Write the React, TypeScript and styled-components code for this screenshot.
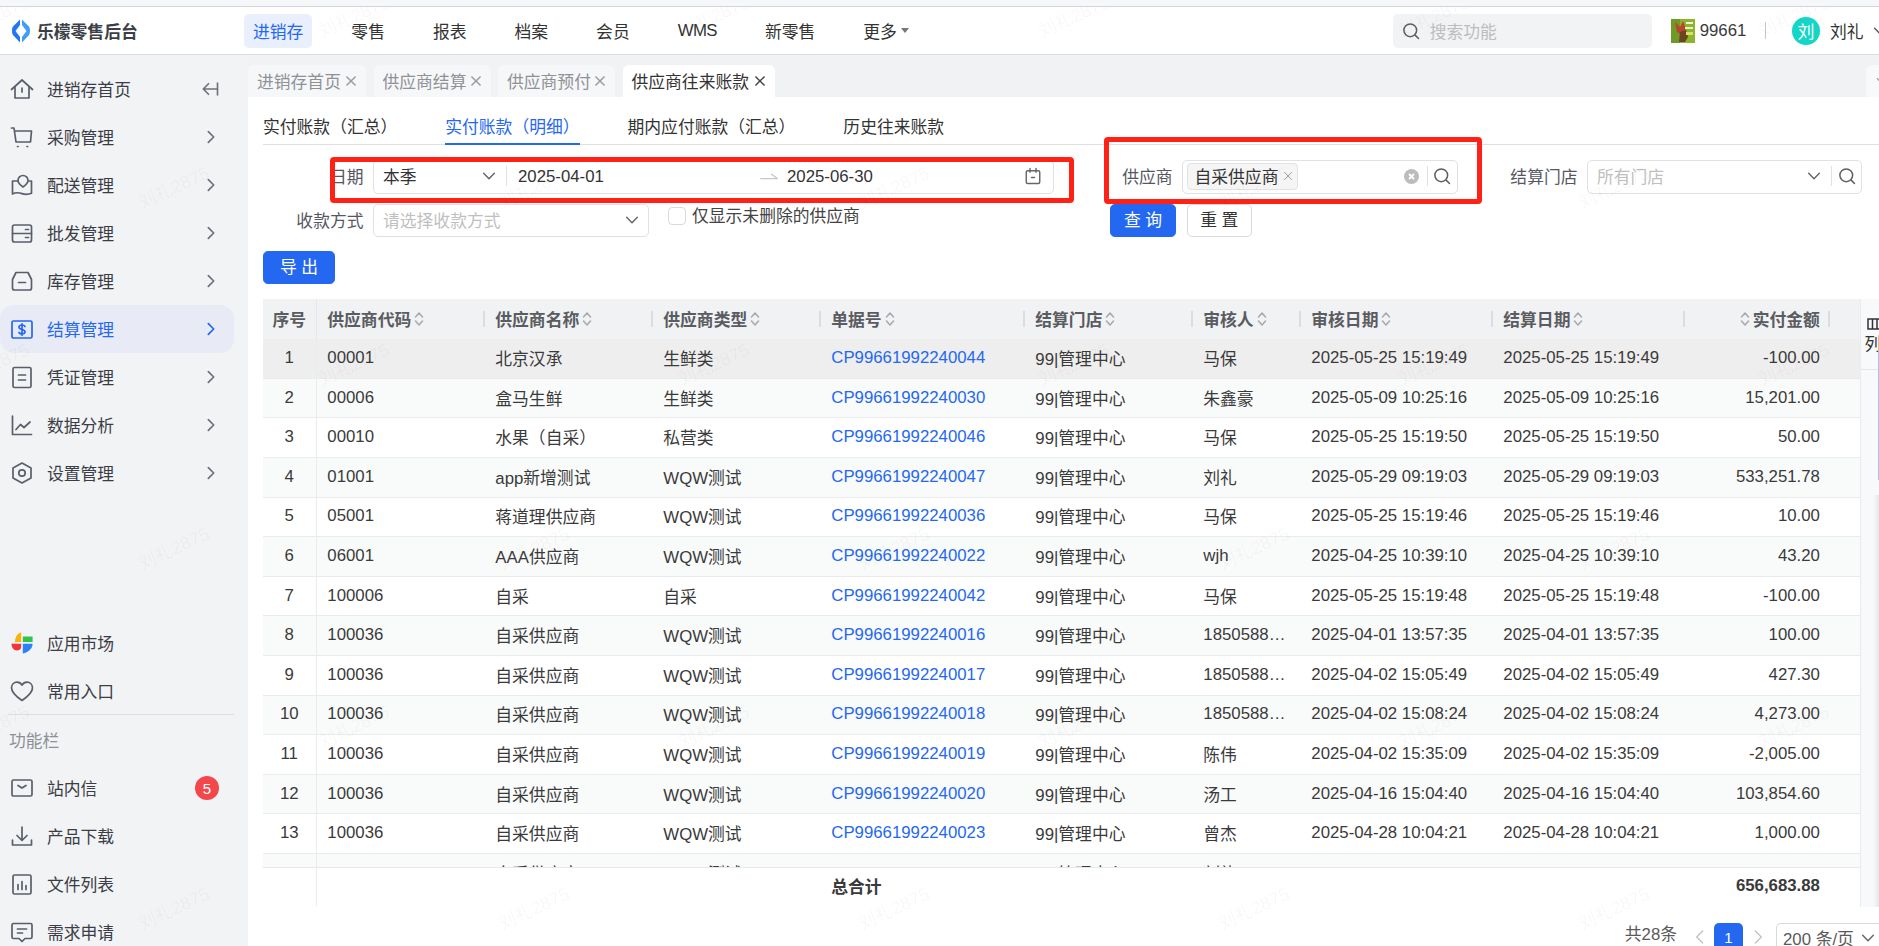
import React from 'react';
import styled, { createGlobalStyle } from 'styled-components';

const Global = createGlobalStyle`
  html, body { margin: 0; padding: 0; overflow: hidden; background: #fff; }
  body { font-family: "Liberation Sans", "Noto Sans CJK SC", sans-serif; font-size: 16.8px; color: #333; }
  #root { width: 1879px; height: 946px; }
  * { box-sizing: border-box; }
`;

const Page = styled.div`
  position: relative; width: 1879px; height: 946px; overflow: hidden;
  display: flex; flex-direction: column; background: #fff;
`;
const TopStrip = styled.div`height: 7px; flex: none; background: #f6f7f9; border-bottom: 1.2px solid #d3d4d7;`;
const Header = styled.header`
  height: 48px; flex: none; display: flex; align-items: center; background: #fff;
  border-bottom: 1.2px solid #dcdde0;
`;
const Brand = styled.div`width: 244px; flex: none; display: flex; align-items: center; padding-left: 12px; gap: 7px;`;
const BrandName = styled.span`font-size: 16.8px; font-weight: 700; color: #3c3f47;`;
const Nav = styled.nav`display: flex; align-items: center; gap: 30px;`;
const NavItem = styled.a<{ $active?: boolean; $tight?: boolean }>`
  height: 34px; padding: 0 9px; border-radius: 5px; display: flex; align-items: center; gap: 4px;
  background: ${p => (p.$active ? '#e9effc' : 'transparent')};
  color: ${p => (p.$active ? '#2468f2' : '#333')};
  letter-spacing: ${p => (p.$tight ? '-0.6px' : 'normal')};
`;
const Caret = styled.i`width: 0; height: 0; border: 4px solid transparent; border-top: 5px solid #777; border-bottom: 0;`;
const HeaderSearch = styled.div`
  margin-left: auto; width: 259px; height: 34px; border-radius: 5px; background: #f2f3f5;
  display: flex; align-items: center; padding-left: 9px; gap: 10px; color: #bdbdbd;
`;
const StoreBox = styled.div`display: flex; align-items: center; margin-left: 19px; gap: 5px; color: #3a3a3a;`;
const VRule = styled.i`width: 1.2px; height: 17px; background: #c9cacd; margin: 0 26px 0 18.5px;`;
const Avatar = styled.div`
  width: 28px; height: 28px; flex: none; border-radius: 50%; background: #14d6c6; color: #fff;
  display: flex; align-items: center; justify-content: center; font-size: 17px;
`;
const UserName = styled.span`margin: 0 8px 0 10px; color: #333; white-space: nowrap;`;
const UserBox = styled.div`display: flex; align-items: center; width: 87px; flex: none; overflow: hidden;`;

const Body = styled.div`flex: 1; display: flex; min-height: 0;`;
const Sidebar = styled.aside`width: 248px; flex: none; background: #f2f3f5; padding-top: 10px; overflow: hidden;`;
const MenuGroup = styled.div`display: flex; flex-direction: column;`;
const BottomGroup = styled(MenuGroup)`margin-top: 122px;`;
const MenuItem = styled.div<{ $active?: boolean }>`
  width: 234px; height: 48px; flex: none; display: flex; align-items: center; gap: 13px;
  padding: 0 15px 0 10px; border-radius: 14px;
  background: ${p => (p.$active ? '#e8ebf5' : 'transparent')};
  color: ${p => (p.$active ? '#2468f2' : '#3a3d46')};
`;
const MenuLabel = styled.span`flex: 1; white-space: nowrap;`;
const Divider = styled.div`width: 226px; height: 1.2px; background: #dcdde1; margin: -1px 0 0 8px;`;
const SideTitle = styled.div`height: 49px; padding: 13px 0 0 9px; color: #8e9096;`;
const Badge = styled.span`
  width: 24px; height: 24px; border-radius: 50%; background: #f4474c; color: #fff; font-size: 15px;
  display: flex; align-items: center; justify-content: center;
`;

const Main = styled.main`position: relative; flex: 1; min-width: 0; display: flex; flex-direction: column; overflow: hidden;`;
const TabsBar = styled.div`
  height: 42px; flex: none; background: #f1f2f4; padding-top: 10px; display: flex; align-items: stretch; gap: 7.5px;
`;
const PageTab = styled.div<{ $active?: boolean; $w: number }>`
  width: ${p => p.$w}px; border-radius: 6px 6px 0 0; display: flex; align-items: center; justify-content: space-between;
  padding: 0 8px 0 9px; white-space: nowrap;
  background: ${p => (p.$active ? '#fff' : '#f6f7f9')};
  color: ${p => (p.$active ? '#333' : '#8f9196')};
`;
const TabEnd = styled.div`
  margin-left: auto; width: 13px; background: #f8f9fb; border-radius: 6px 0 0 0; overflow: hidden;
  display: flex; align-items: center; padding-left: 9px;
`;

const SubTabs = styled.div`
  height: 48px; flex: none; margin-left: 15px; display: flex; border-bottom: 1.2px solid #dfe0e3;
`;
const SubTab = styled.div<{ $active?: boolean; $gap: number }>`
  height: 48px; display: flex; align-items: center; padding-top: 11px; margin-right: ${p => p.$gap}px; white-space: nowrap;
  color: ${p => (p.$active ? '#2468f2' : '#333')};
  border-bottom: 2.4px solid ${p => (p.$active ? '#2468f2' : 'transparent')};
`;

const FilterRow = styled.div<{ $top: number; $h: number }>`
  margin-top: ${p => p.$top}px; height: ${p => p.$h}px; flex: none; display: flex; align-items: stretch; padding-left: 15px;
`;
const FieldLabel = styled.label<{ $w: number }>`
  width: ${p => p.$w}px; flex: none; display: flex; align-items: center; justify-content: flex-end;
  margin-right: 9.5px; padding-bottom: 1px; color: #55585f; white-space: nowrap;
`;
const Control = styled.div<{ $w: number }>`
  width: ${p => p.$w}px; flex: none; display: flex; align-items: center; background: #fff;
  border: 1.2px solid #dfe1e6; border-radius: 5px; padding: 0 0 1px 9px; color: #333;
`;
const Placeholder = styled.span`flex: 1; color: #bfbfbf; white-space: nowrap;`;
const ScopeSelect = styled.div`
  width: 124px; flex: none; height: 20px; border-right: 1.2px solid #dfe1e6; display: flex; align-items: center;
  justify-content: space-between; padding-right: 9px;
`;
const DateText = styled.span<{ $w?: number }>`
  width: ${p => (p.$w ? p.$w + 'px' : 'auto')}; flex: ${p => (p.$w ? 'none' : '1')};
  margin-left: ${p => (p.$w ? '11px' : '8px')}; padding-top: 2px; color: #333;
`;
const IconSlot = styled.span<{ $mr?: number }>`display: flex; align-items: center; flex: none; margin-right: ${p => p.$mr ?? 0}px;`;
const SearchCap = styled.span`
  height: 20px; border-left: 1.2px solid #dfe1e6; flex: none; width: 30px; display: flex; align-items: center; justify-content: center;
`;
const Tag = styled.span`
  height: 27px; width: 111px; margin-left: -5.5px; flex: none; display: flex; align-items: center; justify-content: space-between;
  padding: 0 3px 0 7px; background: #f5f5f5; border: 1.2px solid #e2e2e2; border-radius: 4px; color: #333;
`;
const Spacer = styled.span`flex: 1;`;
const Check = styled.label`display: flex; align-items: flex-start; gap: 6px; margin-left: 19.5px; width: 442px; padding-top: 3px; color: #444; line-height: 20px;`;
const CheckBox = styled.i`width: 18px; height: 18px; border: 1.2px solid #d9d9d9; border-radius: 4px; background: #fff;`;
const Btn = styled.button<{ $primary?: boolean; $w: number }>`
  width: ${p => p.$w}px; height: 33px; padding: 0 0 2px; border-radius: 4.8px; font: inherit; font-size: 16.8px;
  border: 1.2px solid ${p => (p.$primary ? '#2468f2' : '#d9d9d9')};
  background: ${p => (p.$primary ? '#2468f2' : '#fff')};
  color: ${p => (p.$primary ? '#fff' : '#333')};
`;
const ButtonGap = styled.span`width: 10.5px;`;
const ExportBar = styled.div`margin: 14px 0 15px 15px; height: 33px; flex: none;`;

const TableArea = styled.div`display: flex; margin-left: 15px; height: 608px; flex: none;`;
const TableBox = styled.div`width: 1597px; flex: none; display: flex; flex-direction: column;`;
const cols = '53.5px 168px 168px 168px 204px 168px 108px 192px 192px 145px 30.5px';
const HeadRow = styled.div`display: grid; grid-template-columns: ${cols}; height: 40.3px; flex: none; background: #f1f2f4;`;
const HeadCell = styled.div<{ $align?: string; $first?: boolean }>`
  position: relative; display: flex; align-items: center; gap: 3px; padding: 0 9.6px 0 10.8px; font-weight: 700; color: #5a5c61;
  justify-content: ${p => p.$align || 'flex-start'};
  white-space: nowrap;
  ${p => p.$first ? 'border-right: 1.2px solid #e6e7ea; padding: 0;' : `
  &::after { content: ''; position: absolute; right: 0; top: 12px; height: 16px; width: 1.2px; background: #dcdde0; }`}
`;
const PlainHeadCell = styled.div``;
const Rows = styled.div`height: 528.7px; flex: none; overflow: hidden; border-bottom: 1.2px solid #e6e8ea;`;
const Row = styled.div<{ $bg: string }>`
  display: grid; grid-template-columns: ${cols}; height: 39.6px; background: ${p => p.$bg};
  border-bottom: 1.2px solid #e9ebec; align-items: stretch;
`;
const Cell = styled.div<{ $align?: string; $first?: boolean; $link?: boolean; $bold?: boolean }>`
  display: flex; align-items: center; padding: 0 9.6px 1px 10.8px; white-space: nowrap; overflow: hidden;
  justify-content: ${p => p.$align || 'flex-start'};
  color: ${p => (p.$link ? '#2468f2' : '#3a3a3a')};
  font-weight: ${p => (p.$bold ? 700 : 400)};
  ${p => p.$first ? 'border-right: 1.2px solid #e9ebec; padding: 0 0 1px;' : ''}
`;
const SummaryRow = styled.div`display: grid; grid-template-columns: ${cols}; height: 38px; flex: none;`;
const SidePanel = styled.div`
  position: relative; flex: 1; background: #f8f9fb; border-left: 1.2px solid #e9ebee; overflow: hidden;
  display: flex; flex-direction: column; padding: 19px 0 0 5px;
`;
const PanelHead = styled.div`height: 52px; margin: 0 0 0 -5px; padding-left: 5.5px; border-bottom: 1.2px solid #e6e7ea; flex: none; display: flex; flex-direction: column; width: 24px; white-space: nowrap;`;
const PanelLabel = styled.span`line-height: 24px; margin: 3px 0 0 -2px; color: #333;`;
const PanelBlue = styled.i`position: absolute; right: 0; top: 51px; height: 130px; width: 1.2px; background: #aebcf5;`;
const PanelShadow = styled.i`position: absolute; right: 0; top: 196px; bottom: 0; width: 6px; background: linear-gradient(90deg, rgba(0,0,0,0), rgba(0,0,0,.08));`;

const Pagination = styled.div`
  margin-top: 16px; height: 30px; flex: none; display: flex; align-items: flex-start; justify-content: flex-end; color: #5a5a5a;
`;
const PageCount = styled.span`line-height: 24px; margin-right: 15px;`;
const PageArrow = styled.span<{ $mr: number }>`margin-right: ${p => p.$mr}px; height: 24px; padding-top: 6px; display: block;`;
const PageCurrent = styled.span`
  width: 29px; height: 30px; border-radius: 5px; background: #2468f2; color: #fff; font-size: 15px;
  display: flex; align-items: center; justify-content: center; margin-right: 7px;
`;
const PageSize = styled.div`
  width: 103px; height: 30px; border: 1.2px solid #d9d9d9; border-right: 0; border-radius: 5px 0 0 5px;
  display: flex; align-items: center; justify-content: space-between; padding: 0 3px 0 6px; color: #5a5a5a;
`;

const RedBox = styled.div<{ $l: number; $t: number; $w: number; $h: number }>`
  position: absolute; left: ${p => p.$l}px; top: ${p => p.$t}px; width: ${p => p.$w}px; height: ${p => p.$h}px;
  border: 5px solid #ff2016; border-radius: 4px; pointer-events: none;
`;
const MarkLayer = styled.div`position: absolute; left: 0; top: 7px; right: 0; bottom: 0; overflow: hidden; pointer-events: none;`;
const Mark = styled.span`
  position: absolute; transform: translate(-50%, -50%) rotate(-25deg); font-size: 18px; color: rgba(0,0,0,.04); white-space: nowrap;
`;

const Ic = ({ children, size = 24, color = '#5b5e6b', sw = 1.7 }: { children: React.ReactNode; size?: number; color?: string; sw?: number }) => (
  <svg width={size} height={size} viewBox="0 0 24 24" fill="none" stroke={color} strokeWidth={sw} strokeLinecap="round" strokeLinejoin="round" style={{ flex: 'none', display: 'block' }}>{children}</svg>
);
const Chevron = ({ color = '#6e717a' }: { color?: string }) => (
  <Ic size={16} color={color} sw={2.6}><polyline points="8,4 16,12 8,20" /></Ic>
);
const Down = ({ color = '#666', size = 16 }: { color?: string; size?: number }) => (
  <Ic size={size} color={color} sw={2.2}><polyline points="4,8 12,16 20,8" /></Ic>
);
const SearchIc = ({ size = 18 }: { size?: number }) => (
  <Ic size={size} color="#5f5f5f" sw={2}><circle cx="11" cy="11" r="8.5" /><line x1="17.5" y1="17.5" x2="22" y2="22" /></Ic>
);
const Cross = ({ size = 14, color = '#9a9ca1', sw = 2.6 }: { size?: number; color?: string; sw?: number }) => (
  <Ic size={size} color={color} sw={sw}><line x1="5" y1="5" x2="19" y2="19" /><line x1="19" y1="5" x2="5" y2="19" /></Ic>
);
const Sort = () => (
  <svg width="10" height="16" viewBox="0 0 10 16" fill="none" stroke="#a9abaf" strokeWidth="1.6" strokeLinecap="round" strokeLinejoin="round" style={{ flex: 'none' }}>
    <polyline points="1.5,6 5,2 8.5,6" /><polyline points="1.5,10 5,14 8.5,10" />
  </svg>
);

const icons: Record<string, React.ReactNode> = {
  home: <><path d="M1.5 12.5 12 3l10.5 9.5" /><path d="M5 10.5V21h14V10.5" /><path d="M12 11v4" /></>,
  cart: <><path d="M1.5 3H4l2 14h14.5l1-11H4.8" /><path d="M7.5 21.5h.6M17 21.5h.6" /></>,
  map: <><path d="M7.5 8H2.5v13c3.5-2 6-1.6 9.5-.4s6 1 9.5-.4V8H19" /><path d="M13 2.5a5 5 0 0 1 5 5c0 3-5 6.5-5 6.5s-5-3.500-5-6.500a5 5 0 0 1 5-5z" /></>,
  box: <><rect x="2.500" y="4" width="19" height="17" rx="2" /><path d="M2.500 12.500h19M15.500 8.500h3M15.500 16.500h3" /></>,
  stock: <><path d="M6 3.500h12l3.500 7V19a2 2 0 0 1-2 2h-15a2 2 0 0 1-2-2v-8.500z" /><path d="M8.500 13.500h7" /></>,
  money: <><rect x="2" y="4" width="20" height="17" rx="1.500" /><path d="M15 9.500c-.6-1-1.700-1.500-3-1.500-1.700 0-3 .8-3 2.200 0 3 6 1.600 6 4.600 0 1.400-1.300 2.200-3 2.200-1.300 0-2.500-.5-3-1.500M12 6.800v11.400" /></>,
  doc: <><rect x="3" y="2.500" width="18" height="20" rx="1.500" /><path d="M8.500 10h7M8.500 15h7" /></>,
  chart: <><path d="M2.500 3v18.500h19" /><path d="M6 16.500l4.500-5 3.500 3 6-5.500" /></>,
  gear: <><path d="M12 2l9 5v10l-9 5-9-5V7z" /><circle cx="12" cy="12" r="3.200" /></>,
  heart: <path d="M12 21.500C6 17.500 1.500 13.500 1.500 8.800 1.500 5.500 4 3.200 7 3.200c2 0 3.900 1 5 3 1.100-2 3-3 5-3 3 0 5.500 2.300 5.500 5.600 0 4.700-4.500 8.700-10.500 12.700z" />,
  mail: <><rect x="2" y="4" width="20" height="16" rx="1.500" /><path d="M8 9.500l4 2.500 4-2.500" /></>,
  down: <><path d="M12 3v13M7 11.500l5 5 5-5" /><path d="M2.500 16v5h19v-5" /></>,
  file: <><rect x="3" y="3" width="18" height="19" rx="1.500" /><path d="M8 12.500v5M12 9.500v8M16 13.500v4" /></>,
  chat: <><path d="M3.500 3.500h17a1.500 1.500 0 0 1 1.500 1.500v12a1.500 1.500 0 0 1-1.500 1.500H15l-3 3-3-3H3.500A1.500 1.500 0 0 1 2 17V5a1.500 1.500 0 0 1 1.500-1.500z" /><path d="M7.500 9h9M7.500 13h5" /></>,
};

const Logo = () => (
  <svg width="18" height="24" viewBox="0 0 18 24" style={{ flex: 'none' }}>
    <path d="M8 0.500 1 7.500c-1.300 1.300-1.300 7 0 8.500l7 7.500V18L3.500 12 8 6z" fill="#2275f4" />
    <path d="M10 0.500l7 7c1.300 1.300 1.300 7 0 8.500l-7 7.500V18l4.500-6L10 6z" fill="#3f9ff7" />
  </svg>
);
const Apps = () => (
  <svg width="24" height="24" viewBox="0 0 24 24" style={{ flex: 'none' }}>
    <path d="M11.200 1.500v9.500H5c0-5 2.500-9 6.200-9.500z" fill="#fbb110" />
    <path d="M12.800 5.500h9.800v5.500H12.800z" fill="#33c24d" />
    <path d="M1.500 12.800h9.700v3c0 2.500-2 3.700-4.500 3.700-2.800 0-5.200-2.700-5.200-6.700z" fill="#f2353b" />
    <path d="M12.800 12.800h9.800c0 5-4.500 8.500-9.800 9.700z" fill="#2a82f6" />
  </svg>
);
const StoreImage = () => (
  <svg width="24" height="24" viewBox="0 0 24 24" style={{ flex: 'none' }}>
    <rect width="24" height="24" fill="#8db42e" />
    <rect x="0" y="0" width="9" height="24" fill="#6f9a28" />
    <path d="M4 3l5 5 3-6 3 8-4 6-5-3z" fill="#b8452c" />
    <path d="M9 13l6-2 2 7-3 5H8z" fill="#6b4420" />
    <rect x="15" y="3" width="7" height="2" fill="#f1f3dc" />
    <rect x="14" y="8" width="8" height="2" fill="#e9efc0" />
    <rect x="15" y="13" width="7" height="3" fill="#d8e06a" />
  </svg>
);

const topMenu: [string, string, string?][] = [
  ['home', '进销存首页', 'collapse'], ['cart', '采购管理'], ['map', '配送管理'], ['box', '批发管理'], ['stock', '库存管理'],
  ['money', '结算管理', 'active'], ['doc', '凭证管理'], ['chart', '数据分析'], ['gear', '设置管理'],
];

type R = [string, string, string, string, string, string, string];
const rows: R[] = [
  ['00001', '北京汉承', '生鲜类', '044', '马保', '2025-05-25 15:19:49', '-100.00'],
  ['00006', '盒马生鲜', '生鲜类', '030', '朱鑫豪', '2025-05-09 10:25:16', '15,201.00'],
  ['00010', '水果（自采）', '私营类', '046', '马保', '2025-05-25 15:19:50', '50.00'],
  ['01001', 'app新增测试', 'WQW测试', '047', '刘礼', '2025-05-29 09:19:03', '533,251.78'],
  ['05001', '蒋道理供应商', 'WQW测试', '036', '马保', '2025-05-25 15:19:46', '10.00'],
  ['06001', 'AAA供应商', 'WQW测试', '022', 'wjh', '2025-04-25 10:39:10', '43.20'],
  ['100006', '自采', '自采', '042', '马保', '2025-05-25 15:19:48', '-100.00'],
  ['100036', '自采供应商', 'WQW测试', '016', '1850588…', '2025-04-01 13:57:35', '100.00'],
  ['100036', '自采供应商', 'WQW测试', '017', '1850588…', '2025-04-02 15:05:49', '427.30'],
  ['100036', '自采供应商', 'WQW测试', '018', '1850588…', '2025-04-02 15:08:24', '4,273.00'],
  ['100036', '自采供应商', 'WQW测试', '019', '陈伟', '2025-04-02 15:35:09', '-2,005.00'],
  ['100036', '自采供应商', 'WQW测试', '020', '汤工', '2025-04-16 15:04:40', '103,854.60'],
  ['100036', '自采供应商', 'WQW测试', '023', '曾杰', '2025-04-28 10:04:21', '1,000.00'],
];

const heads = ['供应商代码', '供应商名称', '供应商类型', '单据号', '结算门店', '审核人', '审核日期', '结算日期'];

const markPoints: [number, number][] = [];
[[8, 353], [179, 173], [356, 353], [540, 173], [718, 353], [900, 173]].forEach(([y, x0]) => {
  for (let x = x0 - 360; x < 1900; x += 360) markPoints.push([x, y]);
});

export default function App() {
  return (
    <Page>
      <Global />
      <TopStrip />
      <Header>
        <Brand><Logo /><BrandName>乐檬零售后台</BrandName></Brand>
        <Nav>
          <NavItem $active>进销存</NavItem>
          <NavItem>零售</NavItem>
          <NavItem>报表</NavItem>
          <NavItem>档案</NavItem>
          <NavItem>会员</NavItem>
          <NavItem $tight>WMS</NavItem>
          <NavItem>新零售</NavItem>
          <NavItem>更多<Caret /></NavItem>
        </Nav>
        <HeaderSearch><SearchIc size={18} /><span>搜索功能</span></HeaderSearch>
        <StoreBox><StoreImage /><span>99661</span></StoreBox>
        <VRule />
        <UserBox>
          <Avatar>刘</Avatar>
          <UserName>刘礼</UserName>
          <IconSlot><Down size={16} color="#555" /></IconSlot>
        </UserBox>
      </Header>
      <Body>
        <Sidebar>
          <MenuGroup>
            {topMenu.map(([ic, label, kind]) => (
              <MenuItem key={label} $active={kind === 'active'}>
                <Ic color={kind === 'active' ? '#2468f2' : '#5b5e6b'}>{icons[ic]}</Ic>
                <MenuLabel>{label}</MenuLabel>
                {kind === 'collapse' ? (
                  <Ic size={18} color="#6e717a" sw={2.2}><path d="M21 12H4M10 5l-7 7 7 7M22 4v16" /></Ic>
                ) : (
                  <Chevron color={kind === 'active' ? '#2468f2' : '#6e717a'} />
                )}
              </MenuItem>
            ))}
          </MenuGroup>
          <BottomGroup>
            <MenuItem><Apps /><MenuLabel>应用市场</MenuLabel></MenuItem>
            <MenuItem><Ic>{icons.heart}</Ic><MenuLabel>常用入口</MenuLabel></MenuItem>
            <Divider />
            <SideTitle>功能栏</SideTitle>
            <MenuItem><Ic>{icons.mail}</Ic><MenuLabel>站内信</MenuLabel><Badge>5</Badge></MenuItem>
            <MenuItem><Ic>{icons.down}</Ic><MenuLabel>产品下载</MenuLabel></MenuItem>
            <MenuItem><Ic>{icons.file}</Ic><MenuLabel>文件列表</MenuLabel></MenuItem>
            <MenuItem><Ic>{icons.chat}</Ic><MenuLabel>需求申请</MenuLabel></MenuItem>
          </BottomGroup>
        </Sidebar>
        <Main>
          <TabsBar>
            <PageTab $w={118}>进销存首页<Cross /></PageTab>
            <PageTab $w={117}>供应商结算<Cross /></PageTab>
            <PageTab $w={117}>供应商预付<Cross /></PageTab>
            <PageTab $w={152} $active>供应商往来账款<Cross color="#444" /></PageTab>
            <TabEnd><Down size={14} color="#999" /></TabEnd>
          </TabsBar>
          <SubTabs>
            <SubTab $gap={48}>实付账款（汇总）</SubTab>
            <SubTab $gap={48} $active>实付账款（明细）</SubTab>
            <SubTab $gap={48}>期内应付账款（汇总）</SubTab>
            <SubTab $gap={0}>历史往来账款</SubTab>
          </SubTabs>
          <FilterRow $top={15} $h={33.6}>
            <FieldLabel $w={100.5}>日期</FieldLabel>
            <Control $w={680.5}>
              <ScopeSelect>本季<Down /></ScopeSelect>
              <DateText $w={241}>2025-04-01</DateText>
              <Ic size={20} color="#c4c6ca" sw={1.5}><path d="M2 15h20l-7-5" /></Ic>
              <DateText>2025-06-30</DateText>
              <IconSlot $mr={11}>
                <Ic size={18} color="#666" sw={1.9}><rect x="3" y="5" width="18" height="17" rx="2" /><path d="M8 2v5M16 2v5M10 14h4" /></Ic>
              </IconSlot>
            </Control>
            <FieldLabel $w={119}>供应商</FieldLabel>
            <Control $w={275.5}>
              <Tag>自采供应商<Cross size={12} sw={1.6} color="#8a8a8a" /></Tag>
              <Spacer />
              <IconSlot $mr={8}>
                <svg width="15" height="15" viewBox="0 0 15 15"><circle cx="7.500" cy="7.500" r="7.500" fill="#bcbcbc" /><path d="M5 5l5 5M10 5l-5 5" stroke="#fff" strokeWidth="1.800" /></svg>
              </IconSlot>
              <SearchCap><SearchIc /></SearchCap>
            </Control>
            <FieldLabel $w={120}>结算门店</FieldLabel>
            <Control $w={275}>
              <Placeholder>所有门店</Placeholder>
              <IconSlot $mr={9}><Down /></IconSlot>
              <SearchCap><SearchIc /></SearchCap>
            </Control>
          </FilterRow>
          <FilterRow $top={10.4} $h={33}>
            <FieldLabel $w={100.5}>收款方式</FieldLabel>
            <Control $w={275.5}>
              <Placeholder>请选择收款方式</Placeholder>
              <IconSlot $mr={8}><Down /></IconSlot>
            </Control>
            <Check><CheckBox /><span>仅显示未删除的供应商</span></Check>
            <Btn $primary $w={66}>查 询</Btn>
            <ButtonGap />
            <Btn $w={65.5}>重 置</Btn>
          </FilterRow>
          <ExportBar><Btn $primary $w={72}>导 出</Btn></ExportBar>
          <TableArea>
            <TableBox>
              <HeadRow>
                <HeadCell $first $align="center">序号</HeadCell>
                {heads.map(h => (
                  <HeadCell key={h}>{h}<Sort /></HeadCell>
                ))}
                <HeadCell $align="flex-end"><Sort />实付金额</HeadCell>
                <PlainHeadCell />
              </HeadRow>
              <Rows>
                {rows.map((r, i) => (
                  <Row key={i} $bg={i === 0 ? '#eeeeee' : i % 2 ? '#f9fbfa' : '#fff'}>
                    <Cell $first $align="center">{i + 1}</Cell>
                    <Cell>{r[0]}</Cell>
                    <Cell>{r[1]}</Cell>
                    <Cell>{r[2]}</Cell>
                    <Cell $link>CP99661992240{r[3]}</Cell>
                    <Cell>99|管理中心</Cell>
                    <Cell>{r[4]}</Cell>
                    <Cell>{r[5]}</Cell>
                    <Cell>{r[5]}</Cell>
                    <Cell $align="flex-end">{r[6]}</Cell>
                    <Cell />
                  </Row>
                ))}
                <Row $bg="#f9fbfa">
                  <Cell $first />
                  <Cell />
                  <Cell>自采供应商</Cell>
                  <Cell>WQW测试</Cell>
                  <Cell />
                  <Cell>99|管理中心</Cell>
                  <Cell>刘礼</Cell>
                </Row>
              </Rows>
              <SummaryRow>
                <Cell $first />
                <Cell /><Cell /><Cell />
                <Cell $bold>总合计</Cell>
                <Cell /><Cell /><Cell /><Cell />
                <Cell $bold $align="flex-end">656,683.88</Cell>
                <Cell />
              </SummaryRow>
            </TableBox>
            <SidePanel>
              <PanelHead>
                <svg width="16" height="12" viewBox="0 0 16 12" fill="none" stroke="#333" strokeWidth="1.500" style={{ flex: 'none' }}><path d="M1 1h14v10H1zM5.500 1v10M10 1v10" /></svg>
                <PanelLabel>列</PanelLabel>
              </PanelHead>
              <PanelBlue />
              <PanelShadow />
            </SidePanel>
          </TableArea>
          <Pagination>
            <PageCount>共28条</PageCount>
            <PageArrow $mr={6}><Ic size={16} color="#bfbfbf" sw={1.8}><polyline points="16,3 7,12 16,21" /></Ic></PageArrow>
            <PageCurrent>1</PageCurrent>
            <PageArrow $mr={10}><Ic size={16} color="#bfbfbf" sw={1.8}><polyline points="8,3 17,12 8,21" /></Ic></PageArrow>
            <PageSize>200 条/页<Down /></PageSize>
          </Pagination>
          <RedBox $l={82} $t={102} $w={744} $h={46} />
          <RedBox $l={856} $t={82} $w={378} $h={67} />
        </Main>
      </Body>
      <MarkLayer>
        {markPoints.map(([x, y]) => (
          <Mark key={`${x}-${y}`} style={{ left: x, top: y }}>刘礼2875</Mark>
        ))}
      </MarkLayer>
    </Page>
  );
}
